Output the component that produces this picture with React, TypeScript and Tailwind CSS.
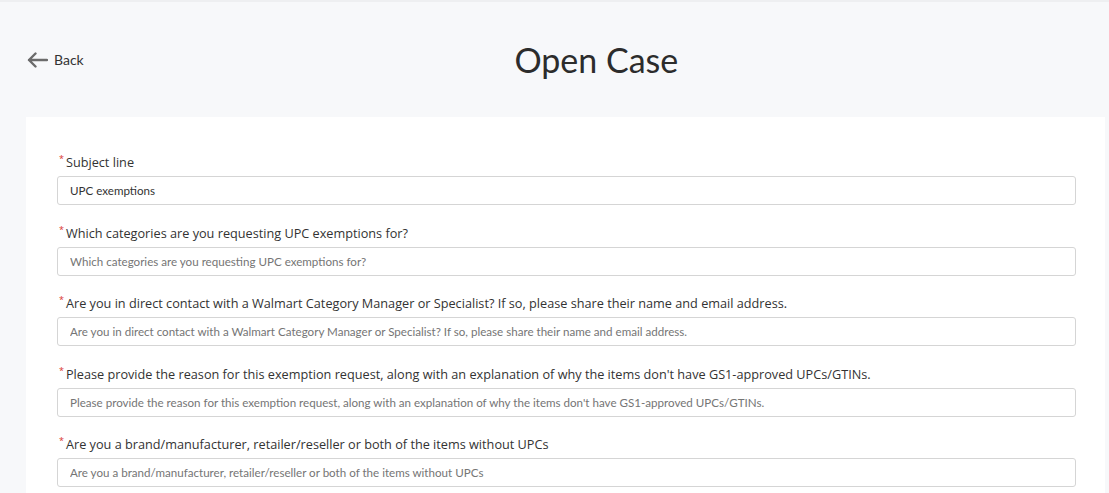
import React from "react";

const fields = [
  { label: "Subject line", value: "UPC exemptions" },
  { label: "Which categories are you requesting UPC exemptions for?" },
  {
    label:
      "Are you in direct contact with a Walmart Category Manager or Specialist? If so, please share their name and email address.",
  },
  {
    label:
      "Please provide the reason for this exemption request, along with an explanation of why the items don't have GS1-approved UPCs/GTINs.",
  },
  { label: "Are you a brand/manufacturer, retailer/reseller or both of the items without UPCs" },
];

export default function App() {
  return (
    <div className="h-[493px] overflow-hidden bg-[#f7f8fa] border-t-2 border-[#eeeff1] font-['Open_Sans',sans-serif] text-[#333]">
      {/* header */}
      <div className="flex items-center h-[115px] pl-[27px]">
        <button className="flex items-center gap-[6px] text-[#333]">
          <svg width="21" height="16" viewBox="0 0 21 16" fill="none" stroke="#6b6b6b" strokeWidth="2.4" strokeLinecap="round" strokeLinejoin="round">
            <path d="M20 8H2M8.5 1.5L2 8l6.5 6.5" />
          </svg>
          <span className="font-['Lato',sans-serif] text-[14px]">Back</span>
        </button>
        <h1 className="flex-1 text-center font-['Lato',sans-serif] text-[34px] text-[#2c2c2c] leading-none">Open Case</h1>
      </div>

      {/* card */}
      <div className="bg-white ml-[26px] mr-[4px] pl-[31px] pr-[29px] pt-[36px] pb-[40px]">
        {fields.map((f, i) => (
          <div key={i} className="mb-[18.5px]">
            <label className="block pl-[2px] text-[12.7px] leading-[18px] text-[#333] mb-[5px]">
              <span className="text-[#d9342b] text-[9px] align-top mr-[2px] relative top-[-3px]">*</span>
              {f.label}
            </label>
            <input
              readOnly
              defaultValue={f.value ?? ""}
              placeholder={f.value ? undefined : f.label}
              className="block w-full h-[29px] border border-[#d5d5d5] rounded-[3px] px-[12px] font-['Lato',sans-serif] text-[11.6px] text-[#333] placeholder:text-[#757575] outline-none"
            />
          </div>
        ))}
      </div>
    </div>
  );
}
